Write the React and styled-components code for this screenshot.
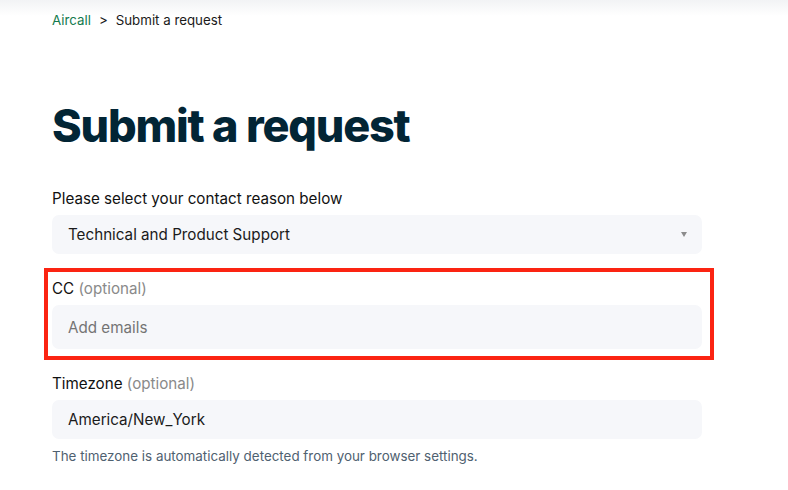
import React from 'react';
import styled, { createGlobalStyle } from 'styled-components';

const Global = createGlobalStyle`
  body {
    margin: 0;
    background: #fff;
    font-family: Inter, "Noto Sans", sans-serif;
    color: #111c24;
  }
`

const Page = styled.div`
  background: linear-gradient(#f2f3f5 0px, #ffffff 16px);
  padding: 12px 0 30px 52px;
`

const Content = styled.main`
  width: 650px;
`

const Crumbs = styled.nav`
  display: flex;
  align-items: center;
  gap: 8px;
  font-size: 13.3px;
  line-height: 16px;
  color: #1a1a1a;
`

const CrumbLink = styled.a`
  color: #137a4e;
  text-decoration: none;
`

const Title = styled.h1`
  margin: 71px 0 37px;
  font-size: 45px;
  line-height: 54px;
  font-weight: 800;
  letter-spacing: -1.2px;
  color: #022535;
`

const Field = styled.div`
  position: relative;
  margin-bottom: ${p => p.gap || 14}px;
`

const Highlight = styled.div`
  position: absolute;
  left: -8px;
  right: -12px;
  top: -12px;
  bottom: -11px;
  border: 4px solid #fb2412;
  pointer-events: none;
`

const Label = styled.label`
  display: block;
  font-size: 15.2px;
  line-height: 18px;
  margin-bottom: 7px;
  color: #111;
`

const Optional = styled.span`
  color: #8a8a8a;
`

const Box = styled.div`
  display: flex;
  align-items: center;
  justify-content: space-between;
  height: ${p => p.h}px;
  padding: 0 15px 0 16px;
  background: #f6f7fa;
  border-radius: 7px;
  font-size: 15.2px;
  color: ${p => (p.placeholder ? '#747474' : '#1b1b1b')};
`

const Caret = styled.span`
  width: 0;
  height: 0;
  border-left: 3px solid transparent;
  border-right: 3px solid transparent;
  border-top: 5px solid #8c8c8c;
`

const Hint = styled.p`
  margin: 9px 0 0;
  font-size: 13.4px;
  color: #4f6170;
`

export default function App() {
  return (
    <>
      <Global />
      <Page>
        <Content>
          <Crumbs>
            <CrumbLink href="#">Aircall</CrumbLink>
            <span>&gt;</span>
            <span>Submit a request</span>
          </Crumbs>
          <Title>Submit a request</Title>
          <Field gap={26}>
            <Label>Please select your contact reason below</Label>
            <Box h={39}>
              Technical and Product Support
              <Caret />
            </Box>
          </Field>
          <Field gap={26}>
            <Highlight />
            <Label>CC <Optional>(optional)</Optional></Label>
            <Box h={44} placeholder="1">Add emails</Box>
          </Field>
          <Field>
            <Label>Timezone <Optional>(optional)</Optional></Label>
            <Box h={39}>America/New_York</Box>
            <Hint>The timezone is automatically detected from your browser settings.</Hint>
          </Field>
        </Content>
      </Page>
    </>
  );
}
